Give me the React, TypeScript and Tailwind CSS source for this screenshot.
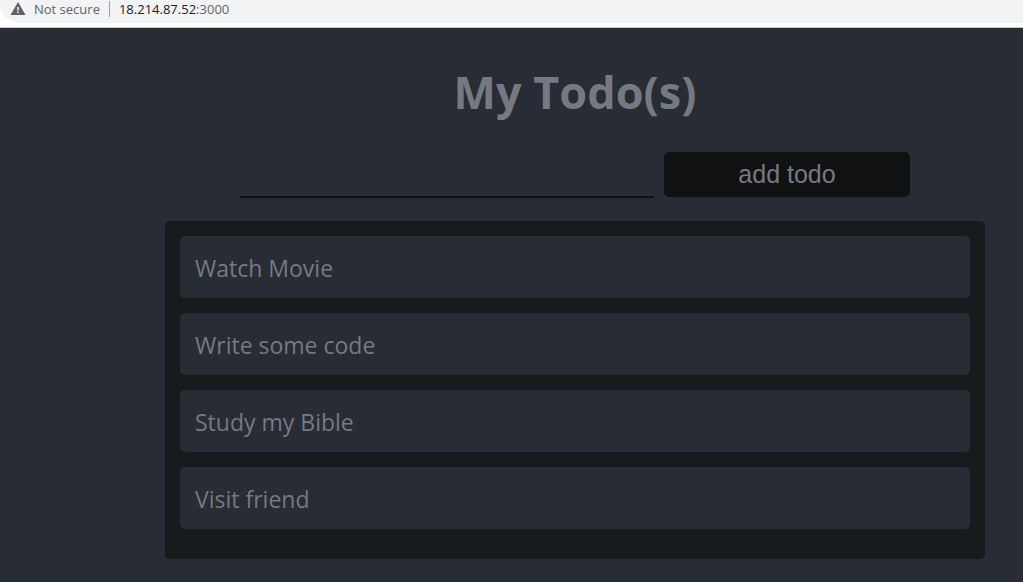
import { useState } from "react";
import type { FormEvent } from "react";

function AddressBar() {
  return (
    <header className="h-7 overflow-hidden border-b border-[#c8c9cb] bg-white font-['Open_Sans',sans-serif]">
      <div className="flex h-[23px] items-start rounded-bl-[20px] bg-[#f1f3f4] pl-[10px] text-[13px] leading-[18px] text-[#5f6368]">
        <svg className="mt-[2px] h-[13px] w-4 shrink-0" viewBox="0 0 16 13" aria-hidden="true">
          <path fill="#5f6368" d="M8 0 15.5 13H.5Z" />
          <path fill="#f1f3f4" d="M7.2 5h1.6v3.4H7.2zM7.2 9.5h1.6V11H7.2z" />
        </svg>
        <span className="ml-2">Not secure</span>
        <span className="mx-[9px] mt-px h-4 w-px bg-[#9aa0a6]" />
        <span>
          <span className="text-[#202124]">18.214.87.52</span>:3000
        </span>
      </div>
    </header>
  );
}

export default function App() {
  const [todos, setTodos] = useState(["Watch Movie", "Write some code", "Study my Bible", "Visit friend"]);
  const [draft, setDraft] = useState("");

  const addTodo = (event: FormEvent) => {
    event.preventDefault();
    if (!draft.trim()) return;
    setTodos([...todos, draft.trim()]);
    setDraft("");
  };

  return (
    <div className="flex min-h-screen flex-col bg-[#282c34] text-[#777980]">
      <AddressBar />
      <main className="pt-8 pr-[38px] pb-[23px] pl-[165px] font-['Open_Sans',sans-serif]">
        <h1 className="text-center text-[45px] leading-[64px] font-bold">My Todo(s)</h1>
        <form onSubmit={addTodo} className="mt-7 flex gap-[10px] px-[75px]">
          <input
            type="text"
            aria-label="New todo"
            value={draft}
            onChange={(event) => setDraft(event.target.value)}
            className="h-[46px] min-w-0 flex-[414] border-b-2 border-[#101113] bg-transparent text-2xl outline-none"
          />
          <button
            type="submit"
            className="h-[45px] flex-[246] rounded-[5px] bg-[#101113] font-['Liberation_Sans',sans-serif] text-[25px]"
          >
            add todo
          </button>
        </form>
        <ul className="mt-[23px] flex flex-col gap-[15px] rounded-[5px] bg-[#181b1e] px-[15px] pt-[15px] pb-[30px]">
          {todos.map((todo, index) => (
            <li key={index} className="rounded-[5px] bg-[#282c34] px-[15px] pt-4 pb-[14px] text-[23px] leading-8">
              {todo}
            </li>
          ))}
        </ul>
      </main>
    </div>
  );
}
